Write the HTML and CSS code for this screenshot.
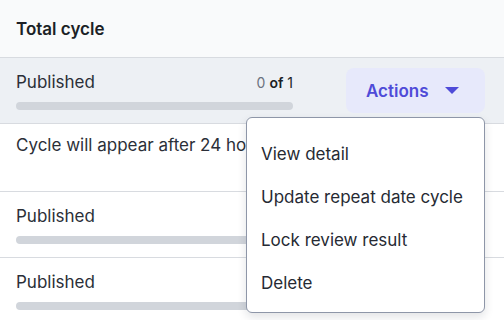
FILE: index.html
```html
<!DOCTYPE html>
<html lang="en">
<head>
  <meta charset="UTF-8" />
  <title>Total cycle</title>
  <link rel="stylesheet" href="styles.css">
</head>
<body>
  <div class="table">
    <div class="thead">Total cycle</div>
    <div class="row row-active">
      <div class="progress-cell">
        <div class="progress-top">
          <span class="status">Published</span>
          <span class="count"><span class="count-done">0</span> <b>of</b> 1</span>
        </div>
        <div class="bar"></div>
      </div>
      <div class="action-cell">
        <button class="actions-btn">Actions <span class="caret"></span></button>
        <div class="menu">
          <div class="menu-item">View detail</div>
          <div class="menu-item">Update repeat date cycle</div>
          <div class="menu-item">Lock review result</div>
          <div class="menu-item">Delete</div>
        </div>
      </div>
    </div>
    <div class="row row-note">
      <div class="note">Cycle will appear after 24 hours</div>
    </div>
    <div class="row">
      <div class="progress-cell">
        <div class="progress-top">
          <span class="status">Published</span>
          <span class="count"><span class="count-done">0</span> <b>of</b> 1</span>
        </div>
        <div class="bar"></div>
      </div>
    </div>
    <div class="row">
      <div class="progress-cell">
        <div class="progress-top">
          <span class="status">Published</span>
          <span class="count"><span class="count-done">0</span> <b>of</b> 1</span>
        </div>
        <div class="bar"></div>
      </div>
    </div>
  </div>
</body>
</html>
```

FILE: styles.css
```css
* {
  box-sizing: border-box;
  margin: 0;
  padding: 0;
}
body {
  font-family: 'Inter', sans-serif;
  color: #2b2f38;
  background: #ffffff;
  overflow: hidden;
  height: 320px;
}
.thead {
  height: 58px;
  padding: 0 16px;
  display: flex;
  align-items: center;
  background: #f9fafb;
  border-bottom: 1px solid #d8dbe0;
  font-size: 17px;
  font-weight: 600;
  color: #1c1f26;
}
.row {
  display: flex;
  align-items: center;
  padding: 12px 16px 13px;
  border-bottom: 1px solid #d8dbe0;
}
.row-active {
  background: #edf0f4;
  height: 66px;
  padding-top: 0;
  padding-bottom: 1px;
}
.row-note {
  height: 68px;
  align-items: flex-start;
  padding-top: 9px;
}
.progress-cell {
  width: 277px;
  flex: 0 0 277px;
}
.progress-top {
  display: flex;
  justify-content: space-between;
  align-items: center;
  height: 24px;
  margin-bottom: 8px;
}
.status {
  font-size: 17px;
  line-height: 24px;
}
.count {
  font-size: 14px;
  color: #1c1f26;
}
.count b {
  font-weight: 600;
}
.count-done {
  color: #6b7280;
}
.bar {
  height: 8px;
  border-radius: 4px;
  background: #d1d5db;
}
.note {
  font-size: 17px;
  line-height: 24px;
  white-space: nowrap;
}
.action-cell {
  position: relative;
  margin-left: 53px;
}
.actions-btn {
  display: flex;
  align-items: center;
  gap: 16px;
  width: 139px;
  height: 45px;
  padding: 0 20px;
  margin-top: 1px;
  border: none;
  border-radius: 8px;
  background: #e7e9fb;
  color: #4f4bd8;
  font-family: 'Inter', sans-serif;
  font-size: 17px;
  font-weight: 600;
}
.caret {
  width: 0;
  height: 0;
  border-left: 7px solid transparent;
  border-right: 7px solid transparent;
  border-top: 7px solid #4f4bd8;
}
.menu {
  position: absolute;
  top: 50px;
  right: 0;
  width: 239px;
  padding: 14px 0 8px;
  background: #ffffff;
  border: 1px solid #8e96a8;
  border-radius: 6px;
  box-shadow: 0 4px 10px rgba(15, 23, 42, 0.12);
  z-index: 2;
}
.menu-item {
  padding: 9.5px 14px;
  font-size: 17px;
  line-height: 24px;
  color: #262a33;
  white-space: nowrap;
}
```
